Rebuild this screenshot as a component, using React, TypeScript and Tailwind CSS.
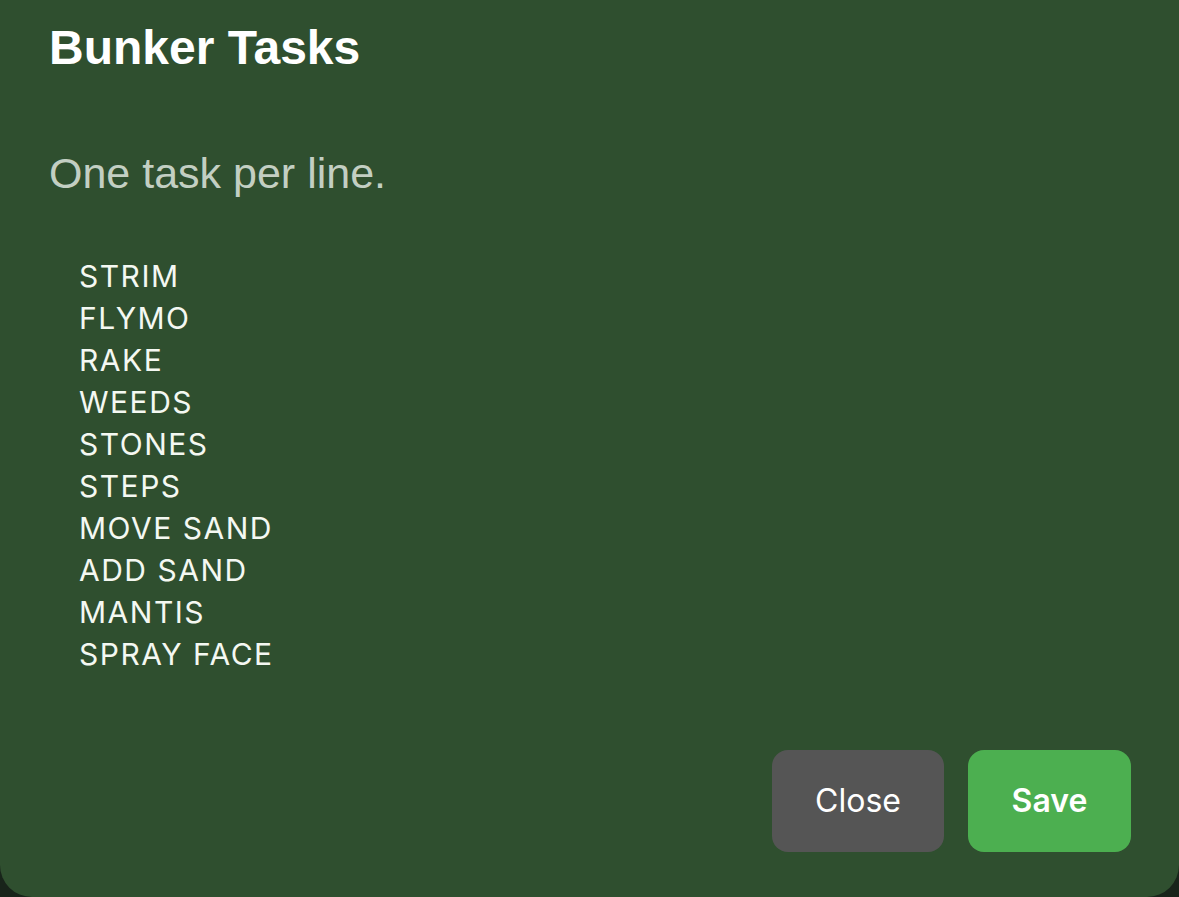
const tasks = [
  'STRIM',
  'FLYMO',
  'RAKE',
  'WEEDS',
  'STONES',
  'STEPS',
  'MOVE SAND',
  'ADD SAND',
  'MANTIS',
  'SPRAY FACE',
]

export default function App() {
  return (
    <div className="h-[897px] w-full bg-[#18241a]">
      <div className="flex h-full flex-col rounded-b-[32px] bg-[#2f4f2f] pl-[49px] pr-[48px]">
        <h1 className="mt-[21px] font-['Liberation_Sans',Arial,sans-serif] text-[48px] font-bold leading-[54px] text-white">
          Bunker Tasks
        </h1>
        <p className="mt-[74px] font-['Liberation_Sans',Arial,sans-serif] text-[43px] leading-[48px] text-[#c3cfc3]">
          One task per line.
        </p>
        <textarea
          className="mt-[58px] h-[420px] w-full resize-none border-0 bg-transparent pl-[30px] font-['Inter',sans-serif] text-[30px] leading-[42px] tracking-[0.05em] text-[#f4f8f2] outline-none"
          rows={10}
          defaultValue={tasks.join('\n')}
        />
        <div className="mt-auto mb-[45px] flex justify-end gap-6">
          <button className="h-[102px] w-[172px] rounded-2xl bg-[#555555] font-['Inter',sans-serif] text-[32px] text-white">
            Close
          </button>
          <button className="h-[102px] w-[163px] rounded-2xl bg-[#4caf50] font-['Inter',sans-serif] text-[32px] font-semibold text-white">
            Save
          </button>
        </div>
      </div>
    </div>
  )
}
